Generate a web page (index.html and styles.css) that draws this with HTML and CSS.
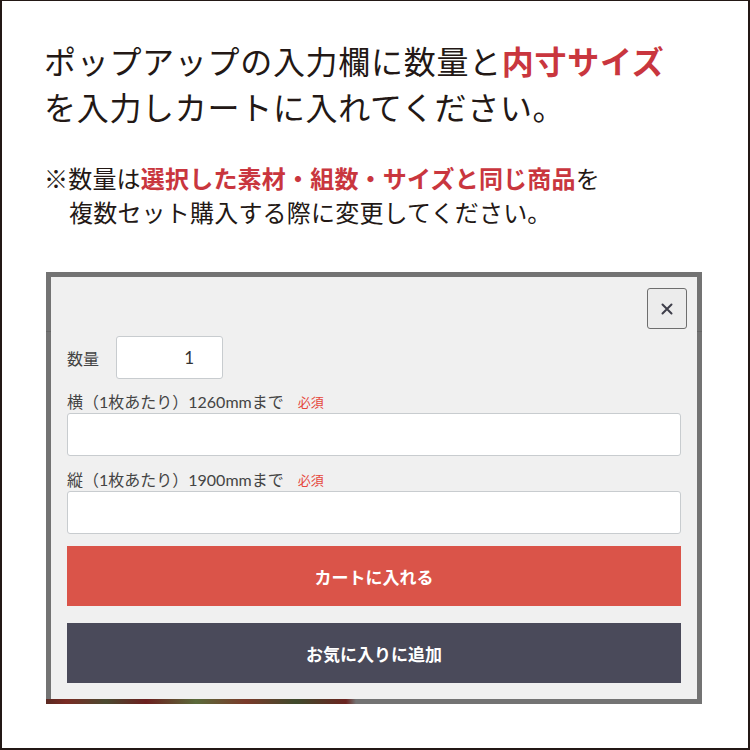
FILE: index.html
```html
<!DOCTYPE html>
<html lang="ja">
<head>
<meta charset="utf-8">
<title>カートに入れる</title>
<link rel="stylesheet" href="styles.css">
</head>
<body>
<div class="frame">
  <h1 class="headline">ポップアップの入力欄に数量と<strong class="hl">内寸サイズ</strong><br>を入力しカートに入れてください。</h1>
  <p class="note"><span class="note-line">※数量は<strong class="hl">選択した素材・組数・サイズと同じ商品</strong>を</span><span class="note-line indent">複数セット購入する際に変更してください。</span></p>

  <div class="modal">
    <div class="panel">
      <div class="panel-head">
        <button class="close" type="button" aria-label="閉じる">
          <svg width="12" height="12" viewBox="0 0 12 12"><path d="M1.5 1.5 L10.5 10.5 M10.5 1.5 L1.5 10.5" stroke="#3e3e4a" stroke-width="2" stroke-linecap="round" fill="none"/></svg>
        </button>
      </div>
      <div class="qty-row">
        <span class="qty-label">数量</span>
        <div class="qty-input">1</div>
      </div>
      <div class="field-label first">横（1枚あたり）1260mmまで<span class="req">必須</span></div>
      <div class="text-input"></div>
      <div class="field-label">縦（1枚あたり）1900mmまで<span class="req">必須</span></div>
      <div class="text-input"></div>
      <button class="btn btn-cart" type="button">カートに入れる</button>
      <button class="btn btn-fav" type="button">お気に入りに追加</button>
    </div>
  </div>
</div>
</body>
</html>
```

FILE: styles.css
```css
* { box-sizing: border-box; }
html, body { margin: 0; padding: 0; background: #fff; }
.frame {
  width: 750px;
  height: 750px;
  border: 2px solid #231815;
  border-top-width: 1px;
  padding: 36px 0 0 42px;
  font-family: "Noto Sans CJK JP", sans-serif;
  color: #231815;
  overflow: hidden;
}
.headline {
  margin: 0;
  font-size: 32px;
  line-height: 46px;
  font-weight: 400;
  letter-spacing: 0.7px;
}
.hl { color: #c9363e; font-weight: 700; }
.note {
  margin: 32px 0 0 0;
  font-size: 24px;
  line-height: 34px;
  letter-spacing: 0.2px;
}
.note-line { display: block; }
.note-line.indent { padding-left: 25px; }

.modal {
  margin: 43px 0 0 2px;
  width: 656px;
  height: 432px;
  padding: 5px;
  background-color: #737373;
  background-image:
    linear-gradient(90deg, #5a2a22 0px, #7a2b24 20px, #4a4a30 60px, #6c1f1f 100px, #5a6a3a 150px, #7a3a2a 200px, #3f4a2c 250px, #6b2420 300px, rgba(0,0,0,0) 310px),
    linear-gradient(#666, #666);
  background-size: 100% 5px, 100% 1px;
  background-position: 0 100%, 0 59px;
  background-repeat: no-repeat;
}
.panel {
  height: 100%;
  background: #f0f0f0;
  padding: 11px 16px 0 16px;
  display: flex;
  flex-direction: column;
  font-family: Lato, "Noto Sans CJK JP", sans-serif;
  color: #444;
}
.panel-head {
  display: flex;
  justify-content: flex-end;
  margin-right: -6px;
}
.close {
  width: 40px;
  height: 41px;
  border: 1px solid #6e6e6e;
  border-radius: 3px;
  background: #ececec;
  padding: 0;
  display: flex;
  align-items: center;
  justify-content: center;
}
.qty-row {
  display: flex;
  align-items: center;
  margin-top: 7px;
}
.qty-label {
  font-size: 16px;
  width: 49px;
  color: #444;
}
.qty-input {
  width: 107px;
  height: 43px;
  background: #fff;
  border: 1px solid #c8cccf;
  border-radius: 3px;
  font-size: 17px;
  line-height: 41px;
  text-align: right;
  padding-right: 28px;
  color: #333;
}
.field-label {
  font-size: 16px;
  line-height: 20px;
  margin-top: 14px;
  margin-bottom: 1px;
  color: #444;
  display: flex;
  align-items: center;
}
.field-label.first { margin-top: 13px; }
.req {
  color: #e5453b;
  font-size: 13px;
  margin-left: 14px;
}
.text-input {
  height: 43px;
  background: #fff;
  border: 1px solid #c8cccf;
  border-radius: 3px;
}
.btn {
  display: block;
  width: 100%;
  height: 60px;
  border: none;
  color: #fff;
  font-family: Lato, "Noto Sans CJK JP", sans-serif;
  font-size: 17px;
  font-weight: 700;
  padding: 0;
}
.btn-cart { background: #da5449; margin-top: 12px; }
.btn-fav { background: #4a4a5a; margin-top: 17px; }
```
